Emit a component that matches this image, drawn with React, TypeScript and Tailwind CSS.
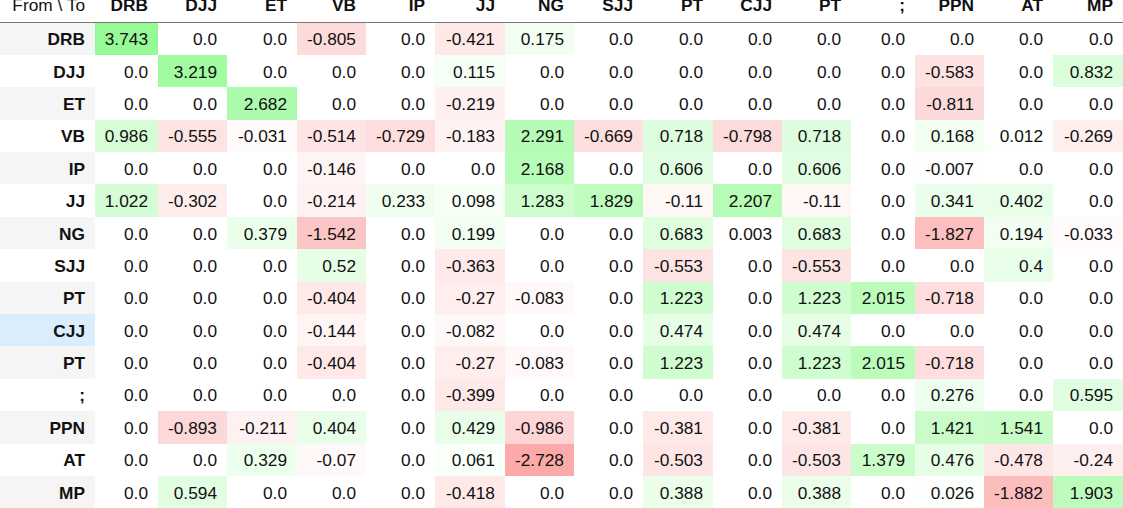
import React from "react";

const cols = ["DRB", "DJJ", "ET", "VB", "IP", "JJ", "NG", "SJJ", "PT", "CJJ", "PT", ";", "PPN", "AT", "MP"];

const rows: [string, number[]][] = [
  ["DRB", [3.743, 0, 0, -0.805, 0, -0.421, 0.175, 0, 0, 0, 0, 0, 0, 0, 0]],
  ["DJJ", [0, 3.219, 0, 0, 0, 0.115, 0, 0, 0, 0, 0, 0, -0.583, 0, 0.832]],
  ["ET", [0, 0, 2.682, 0, 0, -0.219, 0, 0, 0, 0, 0, 0, -0.811, 0, 0]],
  ["VB", [0.986, -0.555, -0.031, -0.514, -0.729, -0.183, 2.291, -0.669, 0.718, -0.798, 0.718, 0, 0.168, 0.012, -0.269]],
  ["IP", [0, 0, 0, -0.146, 0, 0, 2.168, 0, 0.606, 0, 0.606, 0, -0.007, 0, 0]],
  ["JJ", [1.022, -0.302, 0, -0.214, 0.233, 0.098, 1.283, 1.829, -0.11, 2.207, -0.11, 0, 0.341, 0.402, 0]],
  ["NG", [0, 0, 0.379, -1.542, 0, 0.199, 0, 0, 0.683, 0.003, 0.683, 0, -1.827, 0.194, -0.033]],
  ["SJJ", [0, 0, 0, 0.52, 0, -0.363, 0, 0, -0.553, 0, -0.553, 0, 0, 0.4, 0]],
  ["PT", [0, 0, 0, -0.404, 0, -0.27, -0.083, 0, 1.223, 0, 1.223, 2.015, -0.718, 0, 0]],
  ["CJJ", [0, 0, 0, -0.144, 0, -0.082, 0, 0, 0.474, 0, 0.474, 0, 0, 0, 0]],
  ["PT", [0, 0, 0, -0.404, 0, -0.27, -0.083, 0, 1.223, 0, 1.223, 2.015, -0.718, 0, 0]],
  [";", [0, 0, 0, 0, 0, -0.399, 0, 0, 0, 0, 0, 0, 0.276, 0, 0.595]],
  ["PPN", [0, -0.893, -0.211, 0.404, 0, 0.429, -0.986, 0, -0.381, 0, -0.381, 0, 1.421, 1.541, 0]],
  ["AT", [0, 0, 0.329, -0.07, 0, 0.061, -2.728, 0, -0.503, 0, -0.503, 1.379, 0.476, -0.478, -0.24]],
  ["MP", [0, 0.594, 0, 0, 0, -0.418, 0, 0, 0.388, 0, 0.388, 0, 0.026, -1.882, 1.903]],
];

const VMAX = 3.743;

function bg(v: number): string {
  if (v === 0) return "rgb(255,255,255)";
  const t = Math.pow(Math.min(Math.abs(v) / VMAX, 1), 0.7);
  const full = v > 0 ? [150, 250, 150] : [250, 148, 148];
  const c = full.map((f) => Math.round(255 + (f - 255) * t));
  return `rgb(${c[0]},${c[1]},${c[2]})`;
}

function fmt(v: number): string {
  if (v === 0) return "0.0";
  return String(v);
}

function rowHeaderBg(i: number): string {
  if (i === 9) return "bg-[#d9edfd]";
  return i % 2 === 0 ? "bg-[#f5f5f5]" : "bg-white";
}

export default function App() {
  return (
    <div
      className="w-[1123px] h-[508px] overflow-hidden bg-white text-[17.3px] text-[#111]"
      style={{ fontFamily: '"Liberation Sans", Arial, sans-serif' }}
    >
      <div className="grid grid-cols-[95px_63px_69px_70px_69px_69px_70px_69px_69px_70px_69px_69px_64px_69px_69px_70px] grid-rows-[22.5px_repeat(15,32.4px)]">
        <div className="flex items-start justify-end pr-[10px] border-b border-[#777]">
          <span className="-mt-[5px] leading-[20px] font-normal">From \ To</span>
        </div>
        {cols.map((c, j) => (
          <div key={"h" + j} className="flex items-start justify-end pr-[10px] border-b border-[#777]">
            <span className="-mt-[5px] leading-[20px] font-bold">{c}</span>
          </div>
        ))}
        {rows.map(([name, vals], i) => (
          <React.Fragment key={"r" + i}>
            <div className={`flex items-center justify-end pr-[10px] pt-[1px] font-bold leading-[20px] ${rowHeaderBg(i)}`}>
              {name}
            </div>
            {vals.map((v, j) => (
              <div
                key={"c" + i + "-" + j}
                className="flex items-center justify-end pr-[10px] pt-[1px] leading-[20px]"
                style={{ backgroundColor: bg(v) }}
              >
                {fmt(v)}
              </div>
            ))}
          </React.Fragment>
        ))}
      </div>
    </div>
  );
}
